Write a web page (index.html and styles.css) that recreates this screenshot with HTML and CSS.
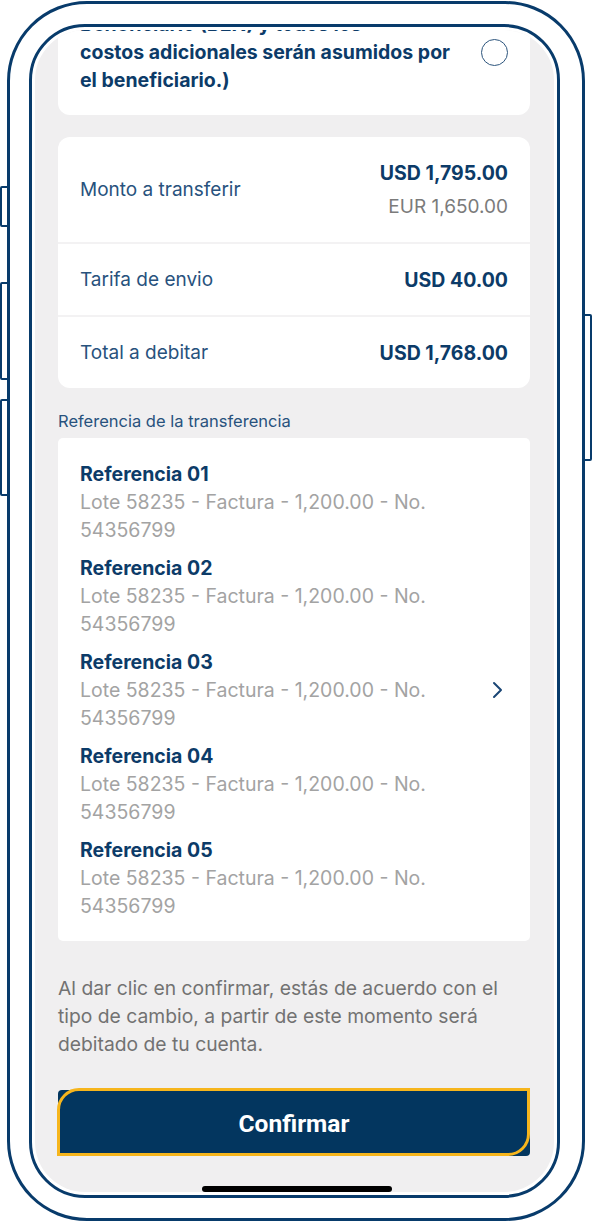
FILE: index.html
```html
<!DOCTYPE html>
<html lang="es">
<head>
    <meta charset="UTF-8">
    <meta name="viewport" content="width=device-width, initial-scale=1.0">
    <title>Confirmar transferencia</title>
    <link rel="stylesheet" href="styles.css">
</head>
<body>
    <div class="device">
        <span class="side-btn btn-mute"></span>
        <span class="side-btn btn-vol-up"></span>
        <span class="side-btn btn-vol-down"></span>
        <span class="side-btn btn-power"></span>

        <div class="phone">
            <div class="screen">
                <div class="content">
                    <div class="scroll">
                        <div class="card option-card">
                            <p class="option-text">Beneficiario (BEN) y todos los<br>costos adicionales serán asumidos por<br>el beneficiario.)</p>
                            <span class="radio"></span>
                        </div>

                        <div class="card summary-card">
                            <div class="summary-row first">
                                <span class="summary-label">Monto a transferir</span>
                                <div class="summary-values">
                                    <span class="amount">USD 1,795.00</span>
                                    <span class="amount-alt">EUR 1,650.00</span>
                                </div>
                            </div>
                            <div class="summary-row">
                                <span class="summary-label">Tarifa de envio</span>
                                <span class="amount">USD 40.00</span>
                            </div>
                            <div class="summary-row">
                                <span class="summary-label">Total a debitar</span>
                                <span class="amount">USD 1,768.00</span>
                            </div>
                        </div>

                        <h2 class="section-label">Referencia de la transferencia</h2>

                        <div class="card ref-card">
                            <ul class="ref-list">
                                <li>
                                    <strong>Referencia 01</strong>
                                    <span>Lote 58235 - Factura - 1,200.00 - No. 54356799</span>
                                </li>
                                <li>
                                    <strong>Referencia 02</strong>
                                    <span>Lote 58235 - Factura - 1,200.00 - No. 54356799</span>
                                </li>
                                <li>
                                    <strong>Referencia 03</strong>
                                    <span>Lote 58235 - Factura - 1,200.00 - No. 54356799</span>
                                </li>
                                <li>
                                    <strong>Referencia 04</strong>
                                    <span>Lote 58235 - Factura - 1,200.00 - No. 54356799</span>
                                </li>
                                <li>
                                    <strong>Referencia 05</strong>
                                    <span>Lote 58235 - Factura - 1,200.00 - No. 54356799</span>
                                </li>
                            </ul>
                            <svg class="chevron" width="12" height="18" viewBox="0 0 12 18">
                                <path d="M2 2l7 7-7 7" fill="none" stroke="#1a4675" stroke-width="2" stroke-linecap="round" stroke-linejoin="round"/>
                            </svg>
                        </div>

                        <p class="note">Al dar clic en confirmar, estás de acuerdo con el tipo de cambio, a partir de este momento será debitado de tu cuenta.</p>

                        <button type="button" class="confirm-btn">Confirmar</button>
                    </div>
                    <div class="home-bar"></div>
                </div>
            </div>
        </div>
    </div>
</body>
</html>
```

FILE: styles.css
```css
* {
    margin: 0;
    padding: 0;
    box-sizing: border-box;
}

body {
    font-family: 'Inter', 'Roboto', sans-serif;
    background-color: white;
    width: 592px;
    height: 1222px;
    overflow: hidden;
}

.device {
    position: relative;
    width: 592px;
    height: 1222px;
}

.side-btn {
    position: absolute;
    background: white;
    border: 2px solid #083b6b;
    border-radius: 2px;
}

.btn-mute {
    left: 0;
    top: 185px;
    width: 9px;
    height: 41px;
}

.btn-vol-up {
    left: 0;
    top: 281px;
    width: 9px;
    height: 98px;
}

.btn-vol-down {
    left: 0;
    top: 398px;
    width: 9px;
    height: 97px;
}

.btn-power {
    right: 0;
    top: 313px;
    width: 10px;
    height: 147px;
}

.phone {
    position: relative;
    margin: 1px 0 0 7px;
    width: 578px;
    height: 1220px;
    background: white;
    border: 3px solid #083b6b;
    border-radius: 80px;
    padding: 20px 22px 20px 19px;
}

.screen {
    height: 100%;
    border: 3px solid #083b6b;
    border-radius: 56px;
    padding: 3px;
    background: white;
}

.content {
    position: relative;
    height: 100%;
    background: #f0eff0;
    border-radius: 50px;
    overflow: hidden;
    padding: 0 24px 0 23px;
}

.scroll {
    margin-top: -42px;
}

.card {
    background: white;
    border-radius: 12px;
}

/* charges option */
.option-card {
    display: flex;
    align-items: center;
    gap: 16px;
    padding: 22px 22px 21px;
}

.option-text {
    flex: 1;
    color: #0c3b68;
    font-size: 19.5px;
    font-weight: 700;
    line-height: 28px;
    white-space: nowrap;
}

.radio {
    width: 27px;
    height: 27px;
    border: 1.5px solid #2d557d;
    border-radius: 50%;
    flex-shrink: 0;
}

/* amounts */
.summary-card {
    margin-top: 22px;
}

.summary-row {
    display: flex;
    justify-content: space-between;
    align-items: center;
    height: 73px;
    padding: 0 22px;
    border-top: 2px solid #f3f2f3;
}

.summary-row.first {
    height: 105px;
    border-top: none;
}

.summary-label {
    color: #28527d;
    font-size: 19px;
}

.summary-values {
    display: flex;
    flex-direction: column;
    align-items: flex-end;
    gap: 10px;
}

.amount {
    color: #0c3b68;
    font-size: 19.5px;
    font-weight: 700;
    line-height: 24px;
}

.amount-alt {
    color: #7b7b7b;
    font-size: 19px;
    line-height: 24px;
}

/* references */
.section-label {
    margin: 23px 0 7px;
    color: #28527d;
    font-size: 16.5px;
    font-weight: 400;
    line-height: 20px;
}

.ref-card {
    display: flex;
    align-items: center;
    border-radius: 5px;
    padding: 22px 22px 21px;
}

.ref-list {
    list-style: none;
    flex: 1;
    display: flex;
    flex-direction: column;
    gap: 10px;
    padding-right: 30px;
}

.ref-list li {
    display: flex;
    flex-direction: column;
    font-size: 19.5px;
    line-height: 28px;
}

.ref-list strong {
    color: #0c3b68;
    font-weight: 700;
}

.ref-list span {
    color: #a3a3a3;
}

.chevron {
    flex-shrink: 0;
    margin-right: 4px;
}

/* footer */
.note {
    margin-top: 33px;
    color: #727272;
    font-size: 19.3px;
    line-height: 28px;
}

.confirm-btn {
    position: relative;
    display: block;
    width: 100%;
    height: 66px;
    margin-top: 32px;
    background: #03365f;
    border: none;
    border-radius: 4px;
    color: white;
    font-family: 'Roboto', sans-serif;
    font-size: 24.5px;
    font-weight: 700;
    cursor: pointer;
}

.confirm-btn::after {
    content: '';
    position: absolute;
    top: -2px;
    left: -1px;
    right: 0;
    bottom: 0;
    border: 3px solid #f6b51c;
    border-radius: 22px 0 22px 0;
}

.home-bar {
    position: absolute;
    left: 50%;
    bottom: 0;
    width: 190px;
    height: 6px;
    margin-left: -93px;
    background: black;
    border-radius: 3px;
}
```
